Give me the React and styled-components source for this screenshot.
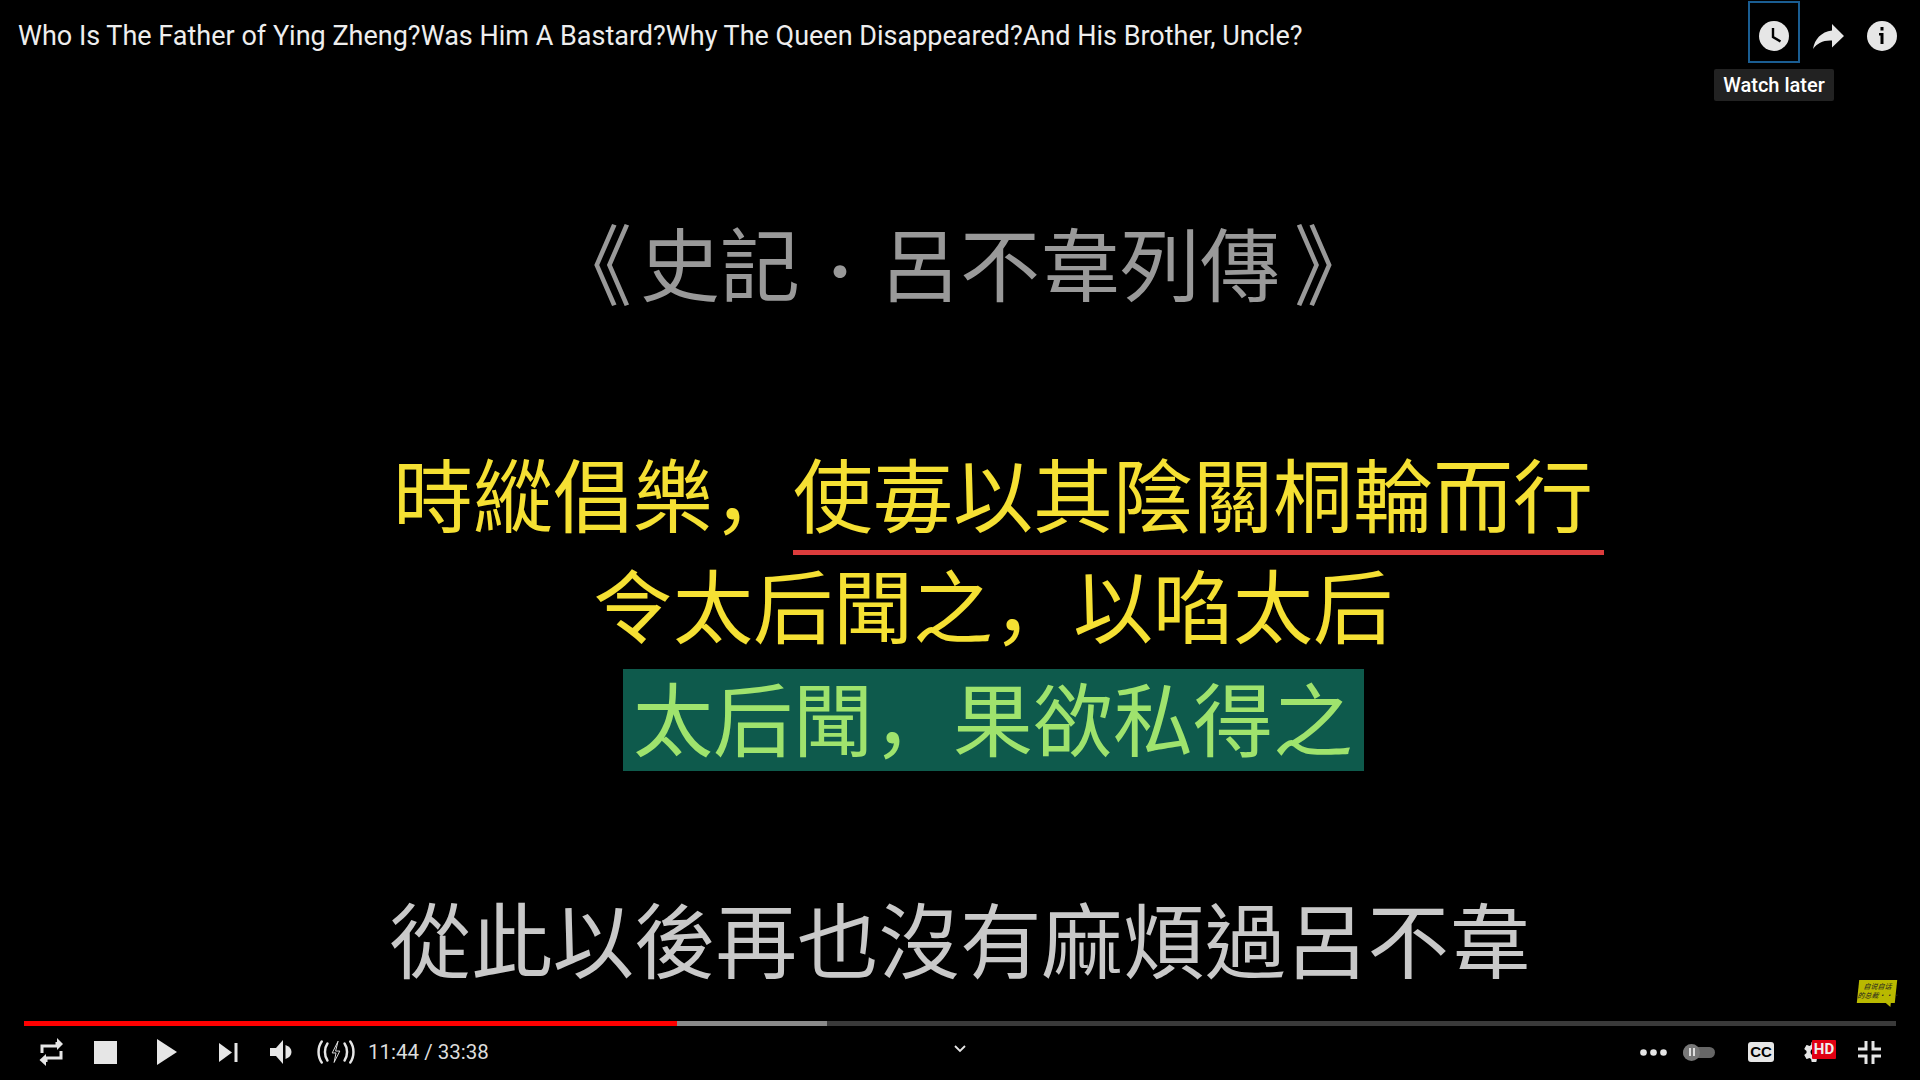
import React from 'react';
import styled, { createGlobalStyle } from 'styled-components';

const Global = createGlobalStyle`
  html, body { margin: 0; padding: 0; background: #000; }
  body { font-family: Roboto, "Liberation Sans", sans-serif; overflow: hidden; }
`;

const cjk = `"Noto Sans CJK TC", "Noto Sans CJK SC", sans-serif`;

const Player = styled.div`
  width: 1920px;
  height: 1080px;
  background: #000;
  display: flex;
  flex-direction: column;
`;

const TopBar = styled.div`
  height: 72px;
  flex: none;
  display: flex;
  align-items: center;
  padding-left: 18px;
  padding-right: 11px;
`;

const Title = styled.div`
  flex: 1;
  color: #eee;
  font-size: 27px;
  font-weight: 400;
  white-space: nowrap;
`;

const TopBtn = styled.div`
  position: relative;
  width: 54px;
  height: 72px;
  display: flex;
  align-items: center;
  justify-content: center;
  box-sizing: border-box;
`;

const FocusBox = styled.div`
  position: absolute;
  left: 1px;
  top: 1px;
  width: 52px;
  height: 62px;
  box-sizing: border-box;
  border: 2px solid #1a5d92;
`;

const Tooltip = styled.div`
  position: absolute;
  left: -33px;
  top: 69px;
  width: 120px;
  height: 32px;
  background: #222;
  border-radius: 2px;
  color: #fff;
  font-size: 20px;
  font-weight: 500;
  line-height: 32px;
  text-align: center;
  white-space: nowrap;
`;

const Stage = styled.div`
  flex: none;
  height: 949px;
  box-sizing: border-box;
  position: relative;
  display: flex;
  flex-direction: column;
  align-items: center;
  padding-top: 139px;
  font-family: ${cjk};
`;

const Heading = styled.div`
  color: #999;
  font-size: 80px;
  line-height: 98px;
  white-space: nowrap;
  display: flex;
`;

const Bracket = styled.span`
  display: block;
  width: 50px;
  white-space: nowrap;
  text-spacing-trim: space-all;
  text-indent: ${p => p.$indent}px;
  transform: scaleY(1.1);
`;

const Dot = styled.span`
  display: inline-block;
  width: 80px;
  text-align: center;
  font-size: 60px;
`;

const Slide = styled.div`
  margin-top: 127px;
  margin-left: 66px;
  display: flex;
  flex-direction: column;
  align-items: center;
  color: #f5e033;
`;

const Line = styled.div`
  font-size: 80px;
  line-height: 92px;
  margin-top: ${p => p.$top || 0}px;
  white-space: nowrap;
`;

const Comma = styled.span`
  font-family: "Noto Sans CJK SC", sans-serif;
`;

const Under = styled.span`
  display: inline-block;
  padding-bottom: 13px;
  border-bottom: 5px solid #dc3c3c;
  padding-right: 11px;
  margin-right: -11px;
`;

const Highlight = styled.div`
  margin-top: 21px;
  width: 741px;
  height: 102px;
  background: #0e5a4c;
  color: #9fe36d;
  font-size: 80px;
  line-height: 92px;
  text-align: center;
  white-space: nowrap;
`;

const Subtitle = styled.div`
  margin-top: 115px;
  color: #c9c9c9;
  font-size: 81.5px;
  line-height: 100px;
  white-space: nowrap;
`;

const Sticker = styled.div`
  position: absolute;
  right: 24px;
  bottom: 18px;
  width: 38px;
  height: 23px;
  background: #b9b900;
  color: #222;
  font-size: 7px;
  line-height: 9px;
  font-style: italic;
  text-align: center;
  padding-top: 2px;
  box-sizing: border-box;
  transform: skewX(-6deg);
  white-space: nowrap;

  &::after {
    content: "";
    position: absolute;
    right: 4px;
    bottom: -4px;
    border-top: 4px solid #b9b900;
    border-left: 5px solid transparent;
  }
`;

const Progress = styled.div`
  flex: none;
  margin: 0 24px;
  height: 5px;
  background: #3a3a3a;
  display: flex;
`;

const Played = styled.div`
  background: #f00;
  height: 100%;
`;

const Loaded = styled.div`
  background: #8a8a8a;
  height: 100%;
`;

const Controls = styled.div`
  flex: 1;
  display: flex;
  align-items: center;
  position: relative;
  padding-left: 38px;
  padding-right: 39px;
  padding-bottom: 2px;
`;

const Slot = styled.div`
  flex: none;
  width: ${p => p.$w}px;
  margin-right: ${p => p.$gap || 0}px;
  display: flex;
  align-items: center;
  justify-content: center;
  position: relative;
`;

const Time = styled.div`
  color: #ddd;
  font-size: 20.5px;
  white-space: nowrap;
  margin-left: 13px;
`;

const Chevron = styled.div`
  position: absolute;
  left: 953px;
  top: 18px;
  width: 14px;
  height: 10px;
  display: flex;
`;

const Spacer = styled.div`
  flex: 1;
`;

const Toggle = styled.div`
  position: relative;
  width: 32px;
  height: 11px;
  background: #666;
  border-radius: 6px;
  margin-right: 33px;
`;

const Knob = styled.div`
  position: absolute;
  left: 0;
  top: -3px;
  width: 17px;
  height: 17px;
  border-radius: 50%;
  background: #777;
  color: #ddd;
  display: flex;
  align-items: center;
  justify-content: center;
  gap: 2px;
`;

const Bar = styled.span`
  width: 2px;
  height: 8px;
  background: #ddd;
`;

const CCBadge = styled.div`
  width: 26px;
  height: 20px;
  border-radius: 3px;
  background: #e6e6e6;
  color: #000;
  font-family: "Liberation Sans", sans-serif;
  font-size: 15px;
  font-weight: 700;
  line-height: 20px;
  text-align: center;
  margin-right: 28px;
`;

const HD = styled.div`
  position: absolute;
  left: 10px;
  top: 0;
  width: 24px;
  height: 19px;
  background: #e00012;
  color: #eee;
  font-size: 15px;
  font-weight: 700;
  line-height: 19px;
  text-align: center;
  border-radius: 1px;
`;

const White = '#e6e6e6';

function Clock() {
  return (
    <svg width="30" height="30" viewBox="0 0 30 30">
      <circle cx="15" cy="15" r="15" fill={White} />
      <path d="M14 7v9l7.5 4.5" fill="none" stroke="#000" strokeWidth="2.4" />
    </svg>
  );
}

function Share() {
  return (
    <svg width="31" height="25" viewBox="0 0 31 25">
      <path d="M19 0l12 12-12 11.5v-7C10 16 4.500 19 0 25 1.800 15 8 8 19 6.500z" fill={White} />
    </svg>
  );
}

function Info() {
  return (
    <svg width="30" height="30" viewBox="0 0 30 30">
      <circle cx="15" cy="15" r="15" fill={White} />
      <rect x="13.500" y="6" width="3" height="3.500" fill="#000" />
      <path d="M12 12h4.500v11H13.500V14.500H12z" fill="#000" />
    </svg>
  );
}

function Repeat() {
  return (
    <svg width="25" height="28" viewBox="0 0 25 28">
      <path d="M3 15V8h15V4" fill="none" stroke={White} strokeWidth="3" />
      <path d="M18 0l6 6-6 6z" fill={White} />
      <path d="M22 13v7H7v4" fill="none" stroke={White} strokeWidth="3" />
      <path d="M7 16l-6.500 6 6.500 6z" fill={White} />
    </svg>
  );
}

function Stop() {
  return (
    <svg width="23" height="23" viewBox="0 0 23 23">
      <rect width="23" height="23" fill={White} />
    </svg>
  );
}

function Play() {
  return (
    <svg width="20" height="26" viewBox="0 0 20 26">
      <path d="M0 0l20 13L0 26z" fill={White} />
    </svg>
  );
}

function Next() {
  return (
    <svg width="19" height="19" viewBox="0 0 19 19">
      <path d="M0 0l13 9.500L0 19z" fill={White} />
      <rect x="15.500" width="3" height="19" fill={White} />
    </svg>
  );
}

function Volume() {
  return (
    <svg width="22" height="24" viewBox="0 0 22 24">
      <path d="M0 8h6l7-8v24l-7-8H0z" fill={White} />
      <path d="M15.500 5c3.800 1.200 6 3.800 6 7s-2.200 5.800-6 7z" fill={White} />
    </svg>
  );
}

function Live() {
  return (
    <svg width="38" height="26" viewBox="0 0 40 26" fill="none" stroke={White} strokeLinecap="round">
      <path d="M5 2C0.500 8 0.500 18 5 24" strokeWidth="2.600" />
      <path d="M11 4C7.500 9 7.500 17 11 22" strokeWidth="2.600" />
      <path d="M29 4c3.500 5 3.500 13 0 18" strokeWidth="2.600" />
      <path d="M35 2c4.500 6 4.500 16 0 22" strokeWidth="2.600" />
      <path d="M22 2l-6 12h4l-2 10 6-12h-4z" strokeWidth="1" strokeLinejoin="round" />
    </svg>
  );
}

function Dots() {
  return (
    <svg width="28" height="7" viewBox="0 0 28 7">
      <circle cx="3.500" cy="3.500" r="3.300" fill={White} />
      <circle cx="13.500" cy="3.500" r="3.300" fill={White} />
      <circle cx="23.500" cy="3.500" r="3.300" fill={White} />
    </svg>
  );
}

function Gear() {
  return (
    <svg width="24" height="24" viewBox="0 0 24 24">
      <path
        fill={White}
        d="M19.430 12.980c.040-.320.070-.640.070-.980s-.030-.660-.070-.980l2.110-1.650c.190-.150.240-.420.120-.640l-2-3.460c-.120-.220-.390-.300-.610-.220l-2.490 1c-.520-.400-1.080-.730-1.690-.980l-.380-2.650A.488.488 0 0 0 14 2h-4c-.250 0-.460.180-.490.420l-.380 2.650c-.610.250-1.170.590-1.690.980l-2.490-1c-.230-.090-.490 0-.610.220l-2 3.460c-.130.220-.070.490.120.640l2.110 1.650c-.040.320-.070.650-.070.980s.030.660.070.980l-2.110 1.650c-.190.150-.240.420-.120.640l2 3.460c.120.220.390.300.610.220l2.490-1c.520.400 1.080.730 1.690.980l.380 2.650c.030.240.240.420.490.420h4c.250 0 .460-.180.490-.420l.380-2.650c.610-.250 1.170-.590 1.690-.980l2.490 1c.230.090.490 0 .610-.220l2-3.460c.120-.220.070-.490-.120-.640l-2.110-1.650zM12 15.500c-1.930 0-3.500-1.570-3.500-3.500s1.570-3.500 3.500-3.500 3.500 1.570 3.500 3.500-1.570 3.500-3.500 3.500z"
      />
    </svg>
  );
}

function Shrink() {
  return (
    <svg width="23" height="23" viewBox="0 0 23 23" fill="none" stroke={White} strokeWidth="3">
      <path d="M8 0v8H0" />
      <path d="M15 0v8h8" />
      <path d="M8 23v-8H0" />
      <path d="M15 23v-8h8" />
    </svg>
  );
}

export default function App() {
  return (
    <Player>
      <Global />
      <TopBar>
        <Title>Who Is The Father of Ying Zheng?Was Him A Bastard?Why The Queen Disappeared?And His Brother, Uncle?</Title>
        <TopBtn>
          <FocusBox />
          <Clock />
          <Tooltip>Watch later</Tooltip>
        </TopBtn>
        <TopBtn><Share /></TopBtn>
        <TopBtn><Info /></TopBtn>
      </TopBar>
      <Stage>
        <Heading>
          <Bracket $indent={-38}>《</Bracket>
          <span>史記<Dot>·</Dot>呂不韋列傳</span>
          <Bracket $indent={14}>》</Bracket>
        </Heading>
        <Slide>
          <Line>時縱倡樂<Comma>，</Comma><Under>使毐以其陰關桐輪而行</Under></Line>
          <Line $top={1}>令太后聞之<Comma>，</Comma>以啗太后</Line>
          <Highlight>太后聞<Comma>，</Comma>果欲私得之</Highlight>
        </Slide>
        <Subtitle>從此以後再也沒有麻煩過呂不韋</Subtitle>
        <Sticker>自说自话<br />的总裁···</Sticker>
      </Stage>
      <Progress>
        <Played style={{ width: 653 }} />
        <Loaded style={{ width: 150 }} />
      </Progress>
      <Controls>
        <Slot $w={26} $gap={30}><Repeat /></Slot>
        <Slot $w={23} $gap={40}><Stop /></Slot>
        <Slot $w={20} $gap={42}><Play /></Slot>
        <Slot $w={19} $gap={32}><Next /></Slot>
        <Slot $w={22} $gap={25}><Volume /></Slot>
        <Slot $w={38}><Live /></Slot>
        <Time>11:44 / 33:38</Time>
        <Chevron>
          <svg width="14" height="10" viewBox="0 0 14 10">
            <path d="M2 2l5 5 5-5" fill="none" stroke={White} strokeWidth="1.800" />
          </svg>
        </Chevron>
        <Spacer />
        <Slot $w={28} $gap={15}><Dots /></Slot>
        <Toggle><Knob><Bar /><Bar /></Knob></Toggle>
        <CCBadge>CC</CCBadge>
        <Slot $w={24} $gap={32}><Gear /><HD>HD</HD></Slot>
        <Slot $w={23}><Shrink /></Slot>
      </Controls>
    </Player>
  );
}
